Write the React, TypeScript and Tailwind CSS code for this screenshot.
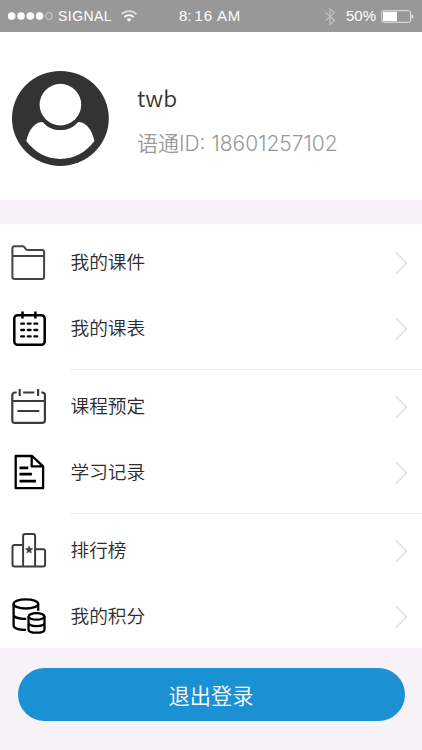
import type { ReactNode } from "react";

/* Menu icons share a 36x40 box so they line up in the left column. */
function Icon({ children, color = "#000", width = 2 }: { children: ReactNode; color?: string; width?: number }) {
  return (
    <svg
      className="h-10 w-9 shrink-0"
      viewBox="0.5 0 36 40"
      fill="none"
      stroke={color}
      strokeWidth={width}
      strokeLinejoin="round"
      aria-hidden
    >
      {children}
    </svg>
  );
}

const FolderIcon = () => (
  <Icon color="#444" width={2}>
    <path d="M1.9 34V5.2a2 2 0 0 1 2-2h8.3c1.2 0 1.6.5 2.3 1.7.8 1.4 1.5 2.1 3 2.1h14.1a2 2 0 0 1 2 2v25a2 2 0 0 1-2 2H3.9a2 2 0 0 1-2-2zM1.9 13h31.7" />
  </Icon>
);

const TimetableIcon = () => (
  <Icon width={2.5}>
    <rect x="3.8" y="6.2" width="30.4" height="29.6" rx="3.2" />
    <path d="M12 2.5v7M24.9 2.5v7" />
    <path
      d="M10.7 14.7h2.8M17.3 14.7h2.8M23.9 14.7h2.8M10.7 21h2.8M17.3 21h2.8M23.9 21h2.8M10.7 27.4h2.8M17.3 27.4h2.8M23.9 27.4h2.8"
      strokeLinecap="round"
      strokeWidth="2.3"
    />
  </Icon>
);

const BookingIcon = () => (
  <Icon color="#3c3c3c" width={2.2}>
    <path d="M6.2 5.5H4.4a2.6 2.6 0 0 0-2.6 2.6V33.6a2.2 2.2 0 0 0 2.2 2.2h28.2a2.2 2.2 0 0 0 2.2-2.2V8.1a2.6 2.6 0 0 0-2.6-2.6h-1.1M12.6 5.5h11.2M1.8 14h32.6M7 24h21.8M9.2 2v7M27.6 2v7" />
  </Icon>
);

const RecordIcon = () => (
  <Icon width={2.3}>
    <path d="M5.2 3h16.4l11 10.4v21.8H5.2zM21.2 3v10.4h11.2" />
    <path d="M9 14.9h8.8M9 21.1h12.4M9 28.2h16.4" strokeWidth="2.7" />
  </Icon>
);

const RankingIcon = () => (
  <Icon color="#3c3c3c" width={2}>
    <path d="M12.6 35.6V5a2 2 0 0 1 2-2h8a2 2 0 0 1 2 2v30.6" />
    <path d="M12.6 14H4a2 2 0 0 0-2 2v17.6a2 2 0 0 0 2 2h28.6a2 2 0 0 0 2-2V20.2a2 2 0 0 0-2-2h-8" />
    <path
      d="M18.6 15.1l1 2.4 2.6.2-2 1.7.6 2.6-2.2-1.4-2.2 1.4.6-2.6-2-1.7 2.6-.2z"
      fill="#3c3c3c"
      strokeWidth=".6"
    />
  </Icon>
);

const PointsIcon = () => (
  <Icon width={2.3}>
    <ellipse cx="15.4" cy="6.9" rx="12.3" ry="4.6" />
    <path d="M3.1 7v21.4c0 2.6 4.6 4.3 12.4 4.4M27.7 7v6.8M3.1 17.4c0 2.6 4.6 4.5 12.6 4.5" />
    <ellipse cx="26" cy="19.4" rx="8" ry="3.3" />
    <path d="M18 19.4v13c0 4.4 16 4.4 16 0v-13M18 25.8c0 4.4 16 4.4 16 0" />
  </Icon>
);

const GROUPS = [
  {
    className: "h-[146px] pt-1.5",
    items: [
      { label: "我的课件", icon: <FolderIcon /> },
      { label: "我的课表", icon: <TimetableIcon /> },
    ],
  },
  {
    className: "h-[144px] pt-1",
    items: [
      { label: "课程预定", icon: <BookingIcon /> },
      { label: "学习记录", icon: <RecordIcon /> },
    ],
  },
  {
    className: "h-[134px] pt-1",
    items: [
      { label: "排行榜", icon: <RankingIcon /> },
      { label: "我的积分", icon: <PointsIcon /> },
    ],
  },
];

function StatusBar() {
  return (
    <header className="flex h-8 items-center bg-[#989898] pl-2 font-['Liberation_Sans',sans-serif] text-[14px] text-white">
      <svg className="h-2 w-[45px]" viewBox="0 0 45 8" fill="#fff" aria-hidden>
        <circle cx="3.7" cy="4" r="3.8" />
        <circle cx="13" cy="4" r="3.8" />
        <circle cx="22.3" cy="4" r="3.8" />
        <circle cx="31.6" cy="4" r="3.8" />
        <circle cx="40.9" cy="4" r="3.4" fill="none" stroke="#fff" strokeWidth=".6" />
      </svg>
      <span className="ml-[5px] w-[54px] tracking-[0.45px] whitespace-nowrap">SIGNAL</span>
      <svg className="ml-[8px] h-3 w-[18px]" viewBox="0 0 18 12" fill="none" stroke="#fff" aria-hidden>
        <path d="M1.6 4.2C5.8.1 12.2.1 16.4 4.2" strokeWidth="1.7" opacity=".65" />
        <path d="M4.3 7c2.7-2.6 6.7-2.6 9.4 0" strokeWidth="1.8" />
        <path d="M6.6 9.2c1.4-1.3 3.4-1.3 4.8 0L9 11.7z" fill="#fff" stroke="none" />
      </svg>
      <span className="ml-[41px] w-[70px] text-[15px] whitespace-nowrap">
        8<span className="tracking-[3px]">:</span>
        <span className="tracking-[0.8px]">16 AM</span>
      </span>
      <svg className="ml-[75px] h-[17px] w-3" viewBox="0 0 12 17" fill="none" stroke="#c6c6c6" strokeWidth="1.1" aria-hidden>
        <path d="M1.5 4.4l9 8.2-4.6 3.8V.8l4.6 3.7-9 8.2" />
      </svg>
      <span className="ml-[10px] w-[31px] text-[15px] whitespace-nowrap">50%</span>
      <svg className="ml-[4px] h-[13px] w-[33px]" viewBox="0 0 33 13" fill="none" aria-hidden>
        <rect x=".9" y=".7" width="28.6" height="11.6" rx="1.6" stroke="#e4e4e4" />
        <rect x="2" y="1.8" width="14" height="9.4" fill="#fff" />
        <path d="M30.7 4.3c2 .8 2 3.6 0 4.4z" fill="#fff" />
      </svg>
    </header>
  );
}

function Profile() {
  return (
    <section className="flex h-[168px] bg-white pl-3">
      <svg className="mt-[38px] h-24 w-[97px] shrink-0" viewBox="0 0 97 96" aria-hidden>
        <ellipse cx="48.4" cy="48.4" rx="48.4" ry="47.5" fill="#333" />
        <circle cx="48.4" cy="34.6" r="20.8" fill="#fff" />
        <path
          d="M30.6 61.9c4.3 5.3 10.6 8.2 17.8 8.2s13.5-2.900 17.800-8.200c7.600 0 14 7.300 16.200 19.200C74 92.500 62 99 48.400 99S22.800 92.500 14.300 81.100C16.600 69.200 23 61.900 30.600 61.900z"
          transform="translate(0 -10)"
          fill="#fff"
        />
      </svg>
      <div className="ml-7 pt-[49px]">
        <h1 className="text-[22.5px] leading-8 font-[350] text-[#333]">twb</h1>
        <p className="mt-[13px] text-[21px] leading-8 font-[350] whitespace-nowrap text-[#999]">
          语通<span className="font-['Inter',sans-serif]">ID: 18601257102</span>
        </p>
      </div>
    </section>
  );
}

function MenuRow({ label, icon }: { label: string; icon: ReactNode }) {
  return (
    <li className="flex h-[66px] items-center pr-[14px] pl-[11px]">
      {icon}
      <span className="ml-[23.5px] flex-1 pb-[3px] text-[18.7px] font-[350] text-[#2c2c2c]">{label}</span>
      <svg className="h-6 w-[14px]" viewBox="0 0 14 24" fill="none" stroke="#c8c8c8" aria-hidden>
        <path d="M1.5 1L12.5 12L1.5 23" />
      </svg>
    </li>
  );
}

export default function App() {
  return (
    <div className="flex h-[750px] w-[422px] flex-col overflow-hidden bg-[#f6f2f8] font-['Noto_Sans_CJK_SC',sans-serif]">
      <StatusBar />
      <Profile />
      <nav className="mt-6 bg-white">
        {GROUPS.map((group, i) => (
          <div key={group.items[0].label}>
            <ul className={group.className}>
              {group.items.map((item) => (
                <MenuRow key={item.label} {...item} />
              ))}
            </ul>
            {i < GROUPS.length - 1 && <div className="-mt-px ml-[70px] h-px bg-[#f0f0f0]" />}
          </div>
        ))}
      </nav>
      <button className="mx-auto mt-5 h-[53px] w-[387px] shrink-0 rounded-full bg-[#1b90d2] pt-px text-[21.2px] font-[350] text-white">
        退出登录
      </button>
    </div>
  );
}
